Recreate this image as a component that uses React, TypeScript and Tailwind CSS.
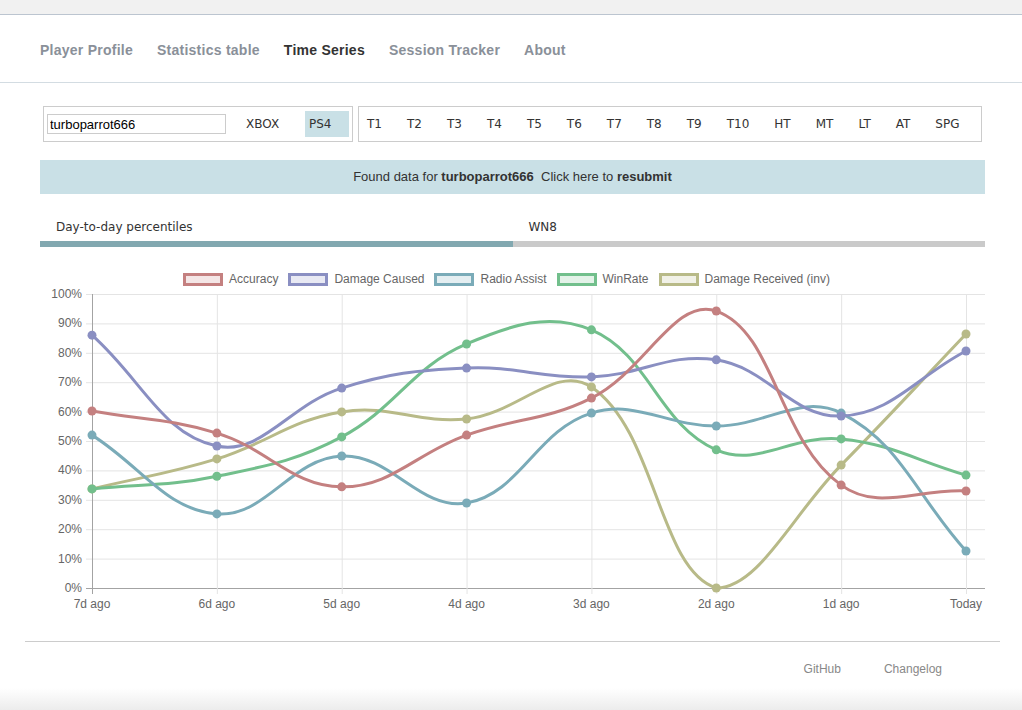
import React from "react";

type Pt = { x: number; y: number };

const labels = ["7d ago", "6d ago", "5d ago", "4d ago", "3d ago", "2d ago", "1d ago", "Today"];

const series = [
  { name: "Accuracy", color: "#c48080", box: "border-[#c48080] bg-[#f4e6e6]", data: [60.2, 52.7, 34.4, 52, 64.6, 94.2, 35, 33] },
  { name: "Damage Caused", color: "#8a8fc2", box: "border-[#8a8fc2] bg-[#e8e9f3]", data: [86, 48.3, 68, 74.8, 71.8, 77.6, 58.5, 80.6] },
  { name: "Radio Assist", color: "#7aabb8", box: "border-[#7aabb8] bg-[#e4eef1]", data: [52, 25.2, 44.9, 28.9, 59.5, 55.1, 59.5, 12.6] },
  { name: "WinRate", color: "#72bf8c", box: "border-[#72bf8c] bg-[#e3f2e8]", data: [33.7, 38, 51.4, 83, 87.8, 47, 50.7, 38.4] },
  { name: "Damage Received (inv)", color: "#b8ba88", box: "border-[#b8ba88] bg-[#f1f1e7]", data: [33.7, 43.9, 59.9, 57.5, 68.4, 0, 41.8, 86.4] },
];

const tiers = ["T1", "T2", "T3", "T4", "T5", "T6", "T7", "T8", "T9", "T10", "HT", "MT", "LT", "AT", "SPG"];
const nav = ["Player Profile", "Statistics table", "Time Series", "Session Tracker", "About"];

// plot area, in svg coords
const X0 = 52;
const X1 = 926;
const TOP = 8;
const BOTTOM = 302;
const RIGHT = 945;

const xAt = (i: number) => X0 + ((X1 - X0) / 7) * i;
const yAt = (v: number) => BOTTOM - ((BOTTOM - TOP) * v) / 100;

// same spline as chart.js (tension 0.4), control points capped to the plot
function curvePath(pts: Pt[]) {
  const t = 0.4;
  const cps = pts.map((cur, i) => {
    const prev = pts[i - 1] ?? cur;
    const next = pts[i + 1] ?? cur;
    const d01 = Math.hypot(cur.x - prev.x, cur.y - prev.y);
    const d12 = Math.hypot(next.x - cur.x, next.y - cur.y);
    const s01 = d01 + d12 ? d01 / (d01 + d12) : 0;
    const s12 = d01 + d12 ? d12 / (d01 + d12) : 0;
    const clampY = (y: number) => Math.min(BOTTOM, Math.max(TOP, y));
    return {
      prev: { x: cur.x - t * s01 * (next.x - prev.x), y: clampY(cur.y - t * s01 * (next.y - prev.y)) },
      next: { x: cur.x + t * s12 * (next.x - prev.x), y: clampY(cur.y + t * s12 * (next.y - prev.y)) },
    };
  });
  let d = `M${pts[0].x},${pts[0].y}`;
  for (let i = 1; i < pts.length; i++) {
    const a = cps[i - 1].next;
    const b = cps[i].prev;
    d += ` C${a.x},${a.y} ${b.x},${b.y} ${pts[i].x},${pts[i].y}`;
  }
  return d;
}

function Chart() {
  const ticks = [0, 10, 20, 30, 40, 50, 60, 70, 80, 90, 100];
  return (
    <svg width={945} height={330} className="block" style={{ fontFamily: "'Liberation Sans', Arial, sans-serif" }}>
      {ticks.map((v) => (
        <line key={v} x1={46} x2={RIGHT} y1={yAt(v) + 0.5} y2={yAt(v) + 0.5} stroke={v === 0 ? "#a3a3a3" : "#e4e4e4"} />
      ))}
      {labels.map((_, i) => (
        <line key={i} x1={xAt(i) + 0.5} x2={xAt(i) + 0.5} y1={TOP} y2={BOTTOM + 6} stroke={i === 0 ? "#a3a3a3" : "#e4e4e4"} />
      ))}
      {ticks.map((v) => (
        <text key={v} x={42} y={yAt(v) + 4} textAnchor="end" fontSize={12} fill="#666">
          {v}%
        </text>
      ))}
      {labels.map((l, i) => (
        <text key={l} x={xAt(i)} y={322} textAnchor="middle" fontSize={12} fill="#666">
          {l}
        </text>
      ))}
      {[...series].reverse().map((s) => {
        const pts = s.data.map((v, i) => ({ x: xAt(i), y: yAt(v) }));
        return (
          <g key={s.name}>
            <path d={curvePath(pts)} fill="none" stroke={s.color} strokeWidth={3} />
            {pts.map((p, i) => (
              <circle key={i} cx={p.x} cy={p.y} r={4.5} fill={s.color} />
            ))}
          </g>
        );
      })}
    </svg>
  );
}

export default function App() {
  return (
    <div className="relative min-h-[710px] bg-white font-['Liberation_Sans',Arial,sans-serif] text-[#333]">
      <div className="h-[15px] border-b border-[#bcc5d0] bg-[#f1f1f1]" />

      <nav className="flex h-[68px] items-center gap-[24px] border-b border-[#d3dce2] pl-[40px] pt-[4px] text-[14px] font-bold tracking-[0.25px] text-[#8a9099]">
        {nav.map((n) => (
          <span key={n} className={n === "Time Series" ? "text-[#333]" : ""}>
            {n}
          </span>
        ))}
      </nav>

      <div className="ml-[40px] mt-[23px] w-[945px]">
        <div className="flex gap-[5px] pl-[3px] font-['DejaVu_Sans',Verdana,sans-serif] text-[12px]">
          <div className="flex h-[36px] w-[310px] items-center border border-[#cccccc] pl-[3px]">
            <input
              readOnly
              value="turboparrot666"
              className="h-[20px] w-[179px] border border-[#cccccc] px-[2px] font-['Liberation_Sans',Arial,sans-serif] text-[13px] text-black outline-none"
            />
            <span className="ml-[20px] w-[59px]">XBOX</span>
            <span className="flex h-[26px] w-[44px] items-center bg-[#c9e0e6] pl-[4px]">PS4</span>
          </div>
          <div className="flex h-[36px] w-[624px] items-center gap-[25px] border border-[#cccccc] pl-[8px]">
            {tiers.map((t) => (
              <span key={t}>{t}</span>
            ))}
          </div>
        </div>

        <div className="mt-[18px] flex h-[34px] items-center justify-center bg-[#c9e0e6] text-[13px] text-[#333]">
          Found data for&nbsp;<b>turboparrot666</b>&nbsp;&nbsp;Click here to&nbsp;<b>resubmit</b>
        </div>

        <div className="mt-[22px] flex font-['DejaVu_Sans',Verdana,sans-serif] text-[12px] text-[#333]">
          <div className="flex-1 border-b-[6px] border-[#82a8b0] pb-[5px] pl-[16px] pt-[2px]">Day-to-day percentiles</div>
          <div className="flex-1 border-b-[6px] border-[#cacaca] pb-[5px] pl-[16px] pt-[2px]">WN8</div>
        </div>

        <div className="mt-[23px] flex items-center justify-center gap-[10px] pr-[12px] text-[12px] text-[#666]">
          {series.map((s) => (
            <div key={s.name} className="flex items-center gap-[6px]">
              <span className={`h-[13px] w-[40px] border-[3px] ${s.box}`} />
              <span>{s.name}</span>
            </div>
          ))}
        </div>

        <div className="-mt-[2px]">
          <Chart />
        </div>
      </div>

      <footer className="ml-[25px] mt-[25px] flex w-[975px] justify-end gap-[43px] border-t border-[#cccccc] pr-[58px] pt-[18px] text-[12px] text-[#888]">
        <span>GitHub</span>
        <span>Changelog</span>
      </footer>

      <div className="absolute inset-x-0 bottom-0 h-[22px] bg-gradient-to-b from-white to-[#ececec]" />
    </div>
  );
}
